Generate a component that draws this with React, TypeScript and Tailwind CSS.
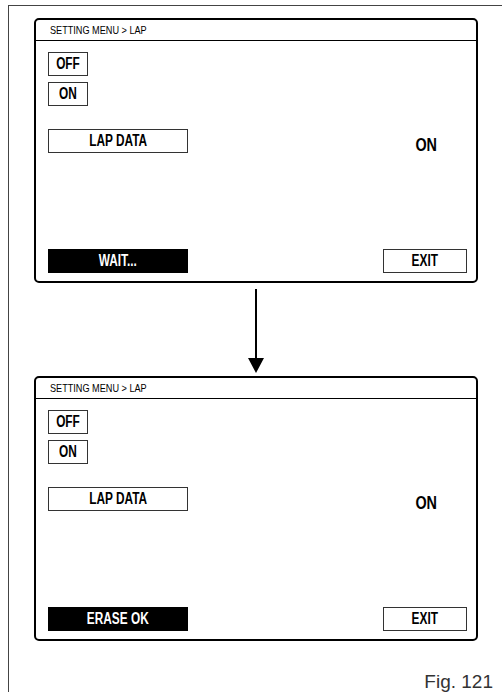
const sans = { fontFamily: '"Liberation Sans", Arial, sans-serif' };

function Box({ label, w, dark }: { label: string; w: string; dark?: boolean }) {
    return (
        <div
            className={`flex h-[24px] items-center justify-center border text-[16px] font-bold leading-none ${w} ${
                dark ? 'border-black bg-black text-white' : 'border-[#333] bg-white text-black'
            }`}
        >
            <span className="inline-block scale-x-[0.74] whitespace-nowrap">{label}</span>
        </div>
    );
}

function Screen({ status }: { status: string }) {
    return (
        <div className="flex h-[265px] w-[444px] flex-col rounded-[5px] border-2 border-black bg-white" style={sans}>
            <div className="flex h-[21px] items-center border-b border-black pl-[14px] text-[11px] leading-none text-black">
                <span className="inline-block origin-left scale-x-[0.83] whitespace-nowrap">SETTING MENU &gt; LAP</span>
            </div>
            <div className="flex flex-1 flex-col pb-[8px] pl-[12px] pr-[9px] pt-[11px]">
                <div className="flex flex-col gap-[6px]">
                    <Box label="OFF" w="w-[40px]" />
                    <Box label="ON" w="w-[40px]" />
                </div>
                <div className="mt-[21px] flex items-center justify-between pr-[30px]">
                    <Box label="LAP DATA" w="w-[140px]" />
                    <span className="inline-block origin-right scale-x-[0.8] pt-[9px] text-[18px] font-bold leading-none">ON</span>
                </div>
                <div className="mt-auto flex items-center justify-between">
                    <Box label={status} w="w-[140px]" dark />
                    <Box label="EXIT" w="w-[84px]" />
                </div>
            </div>
        </div>
    );
}

function Arrow() {
    return (
        <div className="flex h-[93px] w-[444px] justify-center pt-[6px]">
            <svg width="18" height="84" viewBox="0 0 18 84">
                <line x1="9" y1="0" x2="9" y2="72" stroke="black" strokeWidth="2" />
                <polygon points="1,69 17,69 9,84" fill="black" />
            </svg>
        </div>
    );
}

export default function App() {
    return (
        <div className="h-[692px] w-[502px] overflow-hidden bg-white pl-[8px] pt-[5px]">
            <div className="flex h-[700px] flex-col border-l border-t border-[#444] pl-[25px] pt-[12px]">
                <Screen status="WAIT..." />
                <Arrow />
                <Screen status="ERASE OK" />
                <div className="mt-[31px] flex justify-end pr-[9px] text-[19px] leading-none text-[#333]" style={sans}>
                    Fig. 121
                </div>
            </div>
        </div>
    );
}
